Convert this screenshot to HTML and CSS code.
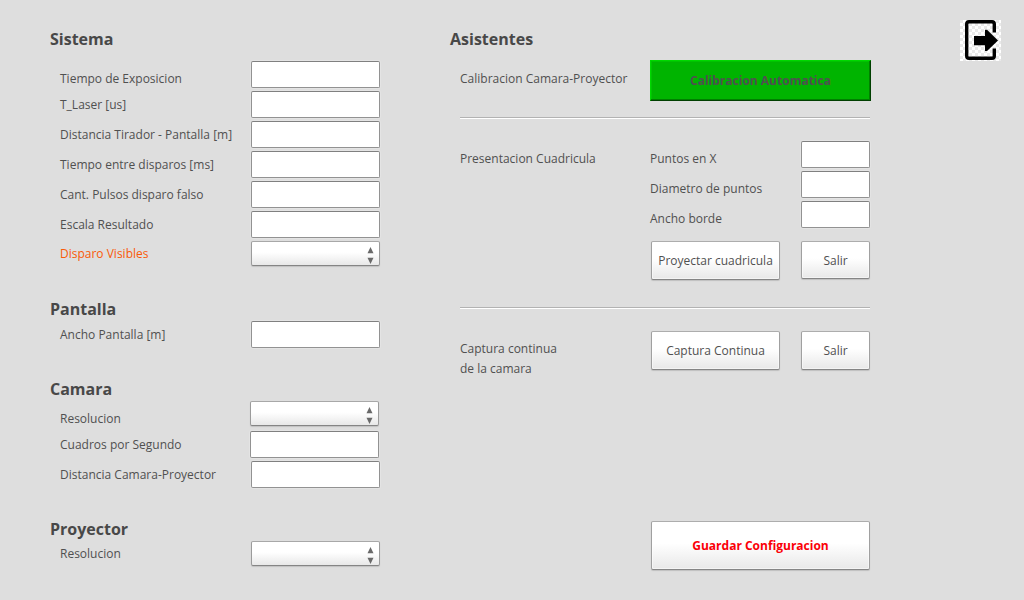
FILE: index.html
```
<!DOCTYPE html>
<html lang="es">
<head>
<meta charset="utf-8">
<title>Configuracion</title>
<link rel="stylesheet" href="styles.css">
</head>
<body>
<main class="page">
  <div class="settings">
    <section class="group group-system">
      <h2>Sistema</h2>
      <div class="row low"><label>Tiempo de Exposicion</label><span class="field"></span></div>
      <div class="row"><label>T_Laser [us]</label><span class="field"></span></div>
      <div class="row"><label>Distancia Tirador - Pantalla [m]</label><span class="field"></span></div>
      <div class="row"><label>Tiempo entre disparos [ms]</label><span class="field"></span></div>
      <div class="row"><label>Cant. Pulsos disparo falso</label><span class="field"></span></div>
      <div class="row"><label>Escala Resultado</label><span class="field"></span></div>
      <div class="row high accent"><label>Disparo Visibles</label><span class="select"><svg width="7" height="17" viewBox="0 0 7 17"><path d="M.5 6.200L3.500 0L6.500 6.200ZM.5 10.800L3.500 17L6.500 10.800Z"/></svg></span></div>
    </section>
    <section class="group group-screen">
      <h2>Pantalla</h2>
      <div class="row"><label>Ancho Pantalla [m]</label><span class="field"></span></div>
    </section>
    <section class="group group-camera">
      <h2>Camara</h2>
      <div class="row low outset"><label>Resolucion</label><span class="select"><svg width="7" height="17" viewBox="0 0 7 17"><path d="M.5 6.200L3.500 0L6.500 6.200ZM.5 10.800L3.500 17L6.500 10.800Z"/></svg></span></div>
      <div class="row outset"><label>Cuadros por Segundo</label><span class="field"></span></div>
      <div class="row"><label>Distancia Camara-Proyector</label><span class="field"></span></div>
    </section>
    <section class="group">
      <h2>Proyector</h2>
      <div class="row high"><label>Resolucion</label><span class="select"><svg width="7" height="17" viewBox="0 0 7 17"><path d="M.5 6.200L3.500 0L6.500 6.200ZM.5 10.800L3.500 17L6.500 10.800Z"/></svg></span></div>
    </section>
  </div>
  <div class="wizards">
    <h2>Asistentes</h2>
    <section class="wizard calibration">
      <p>Calibracion Camara-Proyector</p>
      <button class="calibrate">Calibracion Automatica</button>
    </section>
    <section class="wizard pattern">
      <p>Presentacion Cuadricula</p>
      <div>
        <div class="row low"><label>Puntos en X</label><span class="field"></span></div>
        <div class="row low"><label>Diametro de puntos</label><span class="field"></span></div>
        <div class="row low"><label>Ancho borde</label><span class="field"></span></div>
        <div class="actions"><button class="wide">Proyectar cuadricula</button><button class="small short">Salir</button></div>
      </div>
    </section>
    <section class="wizard capture">
      <p>Captura continua<br>de la camara</p>
      <div class="actions"><button class="wide">Captura Continua</button><button class="small">Salir</button></div>
    </section>
    <button class="save">Guardar Configuracion</button>
  </div>
  <a class="exit" aria-label="Salir">
    <svg width="41" height="41" viewBox="0 0 41 41">
      <defs><pattern id="check" width="6" height="6" patternUnits="userSpaceOnUse"><path fill="#fff" d="M0 0h6v6H0z"/><path fill="#e9e9e9" d="M0 0h3v3H0zM3 3h3v3H3z"/></pattern></defs>
      <path fill="url(#check)" d="M0 0h41v41H0z"/>
      <path fill="none" stroke="#000" stroke-width="3.400" d="M34.300 12.500V4Q34.300 1.700 32 1.700H9Q6.700 1.700 6.700 4V36Q6.700 38.300 9 38.300H32Q34.300 38.300 34.300 36V28.500"/>
      <path d="M14 16H25V9.800H27L38 20.500L27 31H25V25.200H14Z"/>
    </svg>
  </a>
</main>
</body>
</html>
```
FILE: styles.css
```
* { box-sizing: border-box; }
body {
  margin: 0;
  background: #dedede;
  color: #505050;
  font: 12px/20px "Open Sans", "Noto Sans", sans-serif;
}
h2, p { margin: 0; }
h2 { font-size: 16px; line-height: 20px; font-weight: 700; color: #484848; }
.page {
  display: grid;
  grid-template-columns: 400px 421px 89px 41px;
  width: 1024px;
  height: 600px;
  padding: 20px 0 0 50px;
}
.settings, .wizards { padding-top: 9px; }
.group h2 { margin-bottom: 1px; }
.group-system { height: 270px; }
.group-system h2 { margin-bottom: 11px; }
.group-screen { height: 80px; }
.group-camera { height: 140px; }
.row { display: flex; height: 30px; padding-left: 10px; }
.row label { width: 191px; padding-top: 5px; white-space: nowrap; }
.row.low label { padding-top: 9px; }
.row.high label { padding-top: 4px; }
.row.outset label { width: 190px; }
.accent label { color: #f95a08; }
.field, .select {
  width: 129px;
  height: 27px;
  margin-top: 1px;
  border: 1px solid #929292;
  border-top-color: #808080;
  border-radius: 2px;
  background: #fff;
  box-shadow: 0 0 1px 1px rgba(255, 255, 255, .2);
}
.select {
  display: flex;
  justify-content: flex-end;
  height: 25px;
  padding: 5px 5px 0 0;
  border-color: #a8a8a8 #9b9b9b #858585;
  background: linear-gradient(#fff 45%, #e8e8e8);
  box-shadow: 0 1px 1px rgba(0, 0, 0, .13);
}
.select svg { fill: #696969; }
button {
  display: block;
  height: 39px;
  padding: 0;
  border: 1px solid;
  border-color: #adadad #a0a0a0 #858585;
  border-radius: 2px;
  background: linear-gradient(#fff 45%, #e8e8e8);
  box-shadow: 0 1px 1px rgba(0, 0, 0, .14), inset 0 0 0 1px rgba(255, 255, 255, .5);
  color: #505050;
  font: inherit;
}
.wizard { display: grid; grid-template-columns: 190px 221px; margin-left: 10px; }
.wizard p { padding-top: 9px; }
.calibration { height: 57px; margin-top: 11px; }
.calibrate {
  width: 221px;
  height: 41px;
  border: 1px solid;
  border-color: #00d800 #003f00 #003f00 #00d800;
  border-radius: 0;
  background: #00b400;
  box-shadow: inset -1px -1px #008000, inset 1px 1px #00c400;
  font-weight: 700;
}
.pattern, .capture {
  width: 410px;
  border-top: 1px solid #b2b2b2;
  box-shadow: inset 0 1px #fff;
}
.pattern { height: 190px; padding-top: 22px; }
.pattern .row { padding-left: 0; }
.pattern .row label { width: 151px; }
.pattern .field { width: 69px; }
.pattern .actions { margin-top: 11px; }
.actions { display: flex; gap: 21px; margin-left: 1px; }
.wide { width: 129px; }
.small { width: 69px; }
.short { height: 38px; padding-top: 1px; }
.capture { height: 214px; padding-top: 23px; }
.capture p { padding-top: 8px; }
.save {
  width: 219px;
  height: 49px;
  margin-left: 201px;
  color: #fb0007;
  font-weight: 700;
}
.exit { grid-column: 4; width: 41px; height: 41px; }
.exit svg { display: block; }
```
